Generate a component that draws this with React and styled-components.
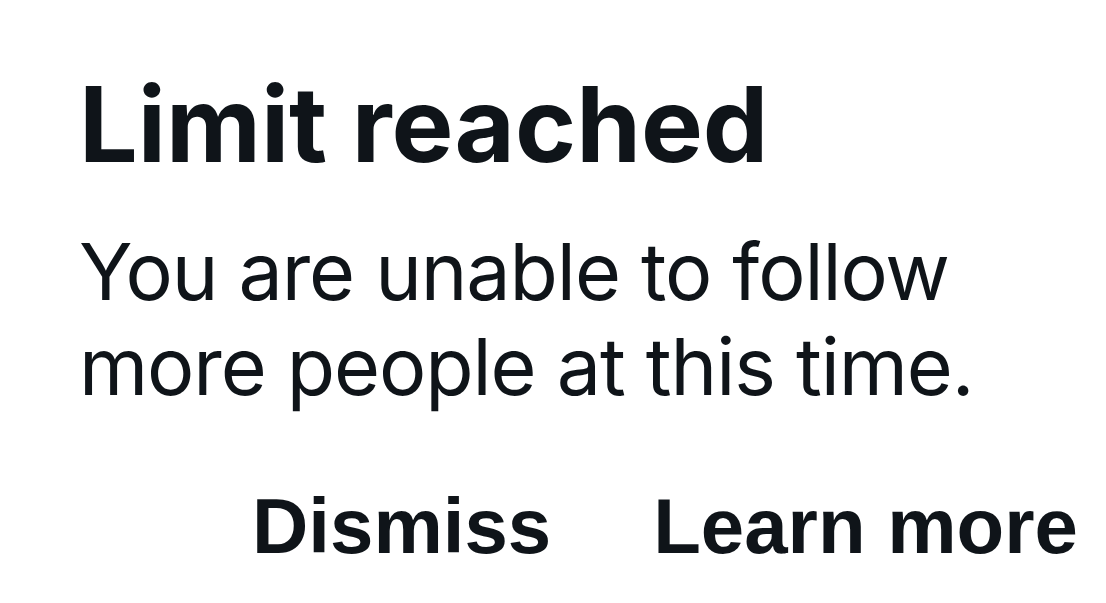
import React from 'react'
import styled, { createGlobalStyle } from 'styled-components'

const GlobalStyle = createGlobalStyle`
  html, body {
    margin: 0;
    padding: 0;
    background: #ffffff;
  }
`

const Dialog = styled.div`
  width: 1106px;
  height: 603px;
  box-sizing: border-box;
  padding: 62px 28px 0 79px;
  display: flex;
  flex-direction: column;
  color: #0f1419;
  overflow: hidden;
`

const Title = styled.h1`
  margin: 0;
  font-family: Inter, "Noto Sans", sans-serif;
  font-weight: 700;
  font-size: 104px;
  line-height: 124px;
  letter-spacing: 0;
`

const Message = styled.p`
  margin: 38px 0 0;
  font-family: Inter, "Noto Sans", sans-serif;
  font-weight: 400;
  font-size: 79px;
  line-height: 95px;
  letter-spacing: -1.1px;
`

const Actions = styled.div`
  margin-top: 67px;
  display: flex;
  justify-content: flex-end;
  gap: 102px;
`

const Action = styled.button`
  border: 0;
  background: none;
  padding: 0;
  color: inherit;
  font-family: "Liberation Sans", Arial, sans-serif;
  font-weight: 700;
  font-size: 78px;
  line-height: 90px;
  cursor: pointer;
`

export default function App() {
  return (
    <>
      <GlobalStyle />
      <Dialog>
        <Title>Limit reached</Title>
        <Message>
          You are unable to follow
          <br />
          more people at this time.
        </Message>
        <Actions>
          <Action>Dismiss</Action>
          <Action>Learn more</Action>
        </Actions>
      </Dialog>
    </>
  )
}
